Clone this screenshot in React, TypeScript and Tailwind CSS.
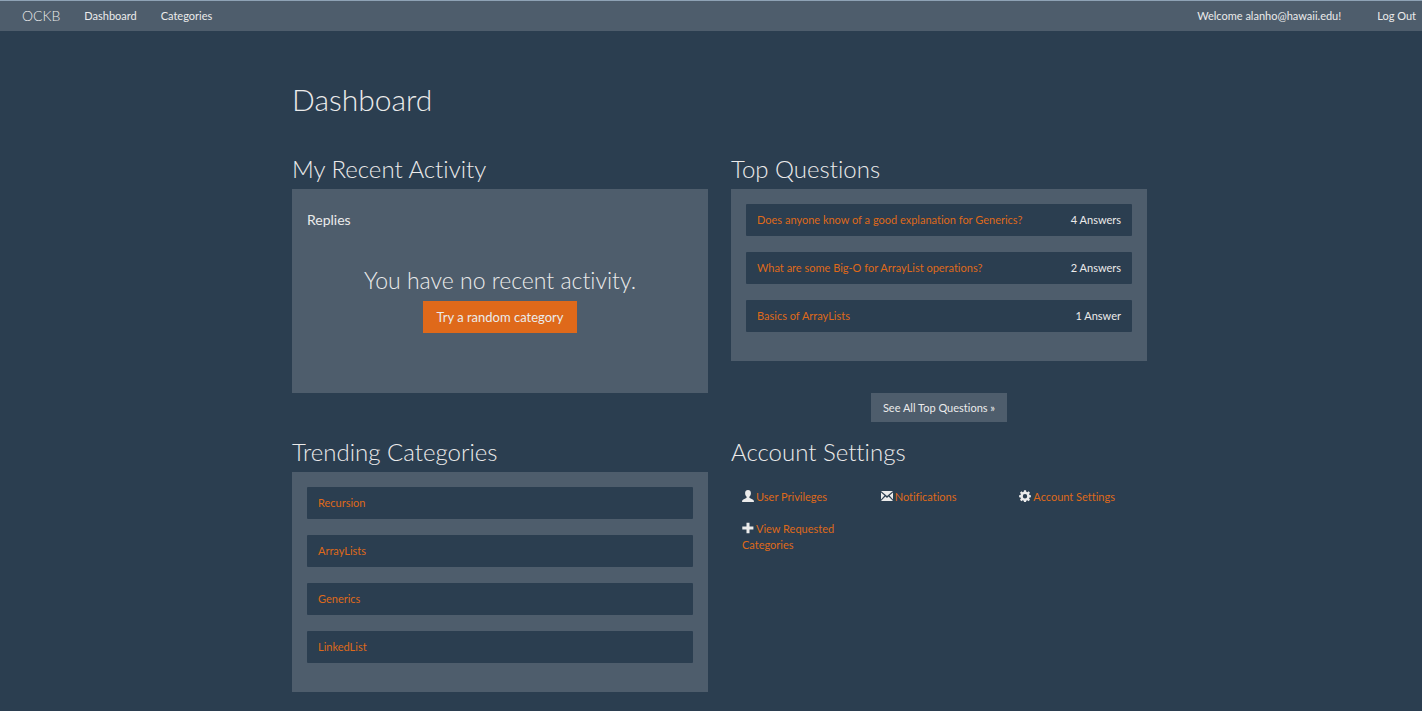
import type { ReactNode } from "react";

type Question = { title: string; answers: string };

const questions: Question[] = [
  { title: "Does anyone know of a good explanation for Generics?", answers: "4 Answers" },
  { title: "What are some Big-O for ArrayList operations?", answers: "2 Answers" },
  { title: "Basics of ArrayLists", answers: "1 Answer" },
];

const categories = ["Recursion", "ArrayLists", "Generics", "LinkedList"];

function Icon({ children }: { children: ReactNode }) {
  return (
    <svg viewBox="0 0 12 12" className="mr-0.5 inline-block size-3 align-[-1px]" fill="currentColor" aria-hidden="true">
      {children}
    </svg>
  );
}

const UserIcon = () => (
  <Icon>
    <path d="M6 0C4.200 0 3.100 1.200 3.100 3c0 1.600.6 3 1.500 3.800.2.700-.1 1.200-.8 1.500L1.300 9.400C.5 9.800.1 10.300.1 11v.9h11.800V11c0-.7-.4-1.200-1.200-1.600L8.200 8.300c-.7-.3-1-.8-.8-1.500C8.300 6 8.900 4.600 8.900 3 8.900 1.200 7.800 0 6 0z" />
  </Icon>
);

const EnvelopeIcon = () => (
  <Icon>
    <path d="M0 1h12L6 6z" />
    <path d="M0 2.400 3.500 5.600 0 9.400zM12 2.400v7L8.500 5.600z" />
    <path d="M0 11 4.400 6.500 6 7.900l1.600-1.400L12 11z" />
  </Icon>
);

const CogIcon = () => (
  <Icon>
    <path
      fillRule="evenodd"
      d="M5 .3h2l.3 1.500 1 .4 1.300-.9 1.400 1.400-.9 1.300.4 1 1.400.3v1.900l-1.400.3-.4 1 .9 1.300-1.400 1.400-1.300-.9-1 .4L7 12H5l-.3-1.300-1-.4-1.300.9L1 9.800l.9-1.300-.4-1L.1 7.200V5.300L1.500 5l.4-1L1 2.700l1.400-1.400 1.300.9 1-.4zM6 4a2.200 2.200 0 1 0 0 4.400A2.200 2.200 0 0 0 6 4z"
    />
  </Icon>
);

const PlusIcon = () => (
  <Icon>
    <path d="M4.500.8h3v3.700h3.900v3H7.500v3.700h-3V7.500H.3v-3h4.200z" />
  </Icon>
);

const settings = [
  { label: "User Privileges", icon: <UserIcon /> },
  { label: "Notifications", icon: <EnvelopeIcon /> },
  { label: "Account Settings", icon: <CogIcon /> },
  { label: "View Requested Categories", icon: <PlusIcon /> },
];

function Heading({ children }: { children: ReactNode }) {
  return <h2 className="mb-[7px] text-2xl leading-[26px] font-light">{children}</h2>;
}

function Row({ children }: { children: ReactNode }) {
  return (
    <li className="flex h-8 items-center justify-between gap-4 rounded-[1px] bg-[#2b3e50] px-[11px]">
      {children}
    </li>
  );
}

function OrangeLink({ children }: { children: ReactNode }) {
  return (
    <a href="#" className="text-[#df691a] hover:underline">
      {children}
    </a>
  );
}

export default function App() {
  return (
    <div className="min-h-screen bg-[#2b3e50] font-['Lato',sans-serif] text-[11px] leading-4 font-normal text-[#ebebeb] [font-variant-ligatures:none]">
      <nav className="flex h-[31px] items-center justify-between border-t border-[#8ea2b5] bg-[#4e5d6c] pr-1.5 pl-[22px]">
        <div className="flex items-center gap-6">
          <a href="#" className="text-sm font-light">OCKB</a>
          <a href="#">Dashboard</a>
          <a href="#">Categories</a>
        </div>
        <div className="flex items-center gap-9">
          <span>Welcome alanho@hawaii.edu!</span>
          <a href="#">Log Out</a>
        </div>
      </nav>

      <main className="pt-[52px] pb-4 pl-[17px]">
        <div className="mx-auto max-w-[855px]">
          <h1 className="text-3xl leading-8 font-light">Dashboard</h1>

          <div className="mt-[41px] grid grid-cols-2 gap-x-[23px] gap-y-[17px]">
            <section>
              <Heading>My Recent Activity</Heading>
              <div className="h-51 bg-[#4e5d6c] px-[15px] pt-[22px]">
                <h3 className="text-sm leading-[18px]">Replies</h3>
                <div className="mt-[38px] text-center">
                  <p className="text-[23px] leading-[26px] font-light">You have no recent activity.</p>
                  <button type="button" className="mt-2 h-8 bg-[#df691a] px-[13px] text-[13px]">
                    Try a random category
                  </button>
                </div>
              </div>
            </section>

            <section>
              <Heading>Top Questions</Heading>
              <div className="bg-[#4e5d6c] px-[15px] pt-[15px] pb-[29px]">
                <ul className="flex flex-col gap-4">
                  {questions.map((question) => (
                    <Row key={question.title}>
                      <OrangeLink>{question.title}</OrangeLink>
                      <span>{question.answers}</span>
                    </Row>
                  ))}
                </ul>
              </div>
              <div className="mt-8 text-center">
                <button type="button" className="h-[29px] bg-[#4e5d6c] px-3">
                  See All Top Questions »
                </button>
              </div>
            </section>

            <section>
              <Heading>Trending Categories</Heading>
              <div className="bg-[#4e5d6c] px-[15px] pt-[15px] pb-[29px]">
                <ul className="flex flex-col gap-4">
                  {categories.map((category) => (
                    <Row key={category}>
                      <OrangeLink>{category}</OrangeLink>
                    </Row>
                  ))}
                </ul>
              </div>
            </section>

            <section>
              <Heading>Account Settings</Heading>
              <ul className="grid grid-cols-3 gap-y-4 pt-[17px]">
                {settings.map(({ label, icon }) => (
                  <li key={label} className="px-[11px]">
                    {icon}
                    <OrangeLink>{label}</OrangeLink>
                  </li>
                ))}
              </ul>
            </section>
          </div>
        </div>
      </main>
    </div>
  );
}
